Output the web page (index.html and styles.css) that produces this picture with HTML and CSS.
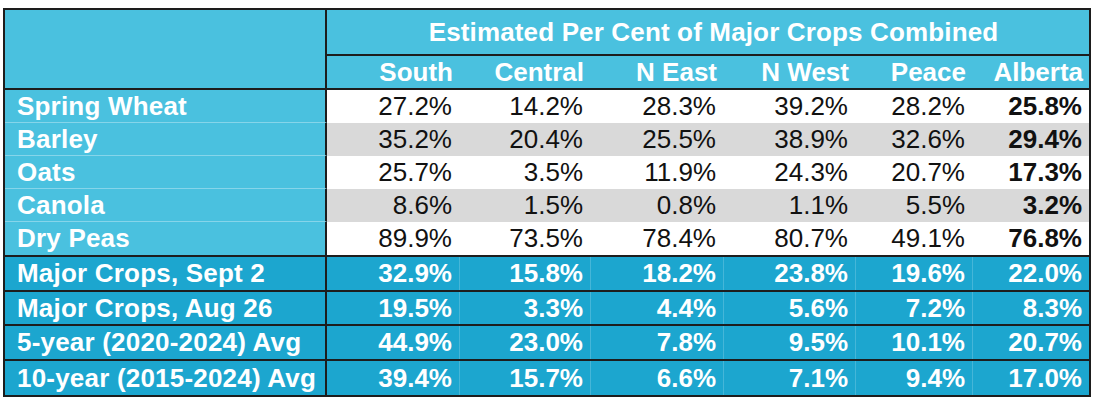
FILE: index.html
```html
<!DOCTYPE html>
<html lang="en">
<head>
<meta charset="utf-8">
<title>Estimated Per Cent of Major Crops Combined</title>
<link rel="stylesheet" href="styles.css">
</head>
<body>
<div class="report">
  <div class="head">
    <div class="corner"></div>
    <div class="title">Estimated Per Cent of Major Crops Combined</div>
    <div class="region">South</div>
    <div class="region">Central</div>
    <div class="region">N East</div>
    <div class="region">N West</div>
    <div class="region">Peace</div>
    <div class="region">Alberta</div>
  </div>
  <div class="crops">
    <div class="row">
      <div class="label">Spring Wheat</div>
      <div class="num">27.2%</div><div class="num">14.2%</div><div class="num">28.3%</div><div class="num">39.2%</div><div class="num">28.2%</div><div class="num total">25.8%</div>
    </div>
    <div class="row shade">
      <div class="label">Barley</div>
      <div class="num">35.2%</div><div class="num">20.4%</div><div class="num">25.5%</div><div class="num">38.9%</div><div class="num">32.6%</div><div class="num total">29.4%</div>
    </div>
    <div class="row">
      <div class="label">Oats</div>
      <div class="num">25.7%</div><div class="num">3.5%</div><div class="num">11.9%</div><div class="num">24.3%</div><div class="num">20.7%</div><div class="num total">17.3%</div>
    </div>
    <div class="row shade">
      <div class="label">Canola</div>
      <div class="num">8.6%</div><div class="num">1.5%</div><div class="num">0.8%</div><div class="num">1.1%</div><div class="num">5.5%</div><div class="num total">3.2%</div>
    </div>
    <div class="row last">
      <div class="label">Dry Peas</div>
      <div class="num">89.9%</div><div class="num">73.5%</div><div class="num">78.4%</div><div class="num">80.7%</div><div class="num">49.1%</div><div class="num total">76.8%</div>
    </div>
  </div>
  <div class="summary">
    <div class="srow tall">
      <div class="label">Major Crops, Sept 2</div>
      <div class="num">32.9%</div><div class="num">15.8%</div><div class="num">18.2%</div><div class="num">23.8%</div><div class="num">19.6%</div><div class="num">22.0%</div>
    </div>
    <div class="srow">
      <div class="label">Major Crops, Aug 26</div>
      <div class="num">19.5%</div><div class="num">3.3%</div><div class="num">4.4%</div><div class="num">5.6%</div><div class="num">7.2%</div><div class="num">8.3%</div>
    </div>
    <div class="srow tall">
      <div class="label">5-year (2020-2024) Avg</div>
      <div class="num">44.9%</div><div class="num">23.0%</div><div class="num">7.8%</div><div class="num">9.5%</div><div class="num">10.1%</div><div class="num">20.7%</div>
    </div>
    <div class="srow end">
      <div class="label">10-year (2015-2024) Avg</div>
      <div class="num">39.4%</div><div class="num">15.7%</div><div class="num">6.6%</div><div class="num">7.1%</div><div class="num">9.4%</div><div class="num">17.0%</div>
    </div>
  </div>
</div>
</body>
</html>
```

FILE: styles.css
```css
* { box-sizing: border-box; }

body {
  margin: 0;
  background: #ffffff;
  font-family: "Liberation Sans", Arial, sans-serif;
  font-size: 26px;
}

.report {
  margin: 8px 0 0 3px;
  width: 1088px;
  border: 2px solid #1d1d1d;
  --cols: 322px 132px 131px 133px 132px 117px 117px;
}

.head {
  display: grid;
  grid-template-columns: var(--cols);
  grid-template-rows: 46px 32px;
  background: #4ac1df;
  color: #ffffff;
  font-weight: bold;
  border-bottom: 2px solid #1d1d1d;
}

.corner {
  grid-row: 1 / span 2;
  border-right: 2px solid #1d1d1d;
}

.title {
  grid-column: 2 / span 6;
  display: flex;
  align-items: center;
  justify-content: center;
  padding-left: 11px;
  letter-spacing: 0.15px;
  border-bottom: 2px solid #1d1d1d;
}

.region {
  display: flex;
  align-items: center;
  justify-content: flex-end;
  padding-right: 6px;
  padding-top: 1px;
}

.row, .srow {
  display: grid;
  grid-template-columns: var(--cols);
}

.row {
  height: 33px;
  background: #ffffff;
  color: #111111;
}

.row.shade { background: #d9d9d9; }

.row.last {
  height: 35px;
  border-bottom: 2px solid #1d1d1d;
}

.label {
  display: flex;
  align-items: center;
  padding-left: 12px;
  font-weight: bold;
  color: #ffffff;
  letter-spacing: 0.2px;
  border-right: 2px solid #1d1d1d;
}

.row .label {
  background: #4ac1df;
  border-bottom: 1px solid #86d5ea;
}

.row.last .label { border-bottom: none; }

.num {
  display: flex;
  align-items: center;
  justify-content: flex-end;
  padding-right: 7px;
}

.num.total { font-weight: bold; }

.srow {
  height: 34px;
  background: #1ca6cf;
  color: #ffffff;
  font-weight: bold;
  border-bottom: 2px solid #1d1d1d;
}

.srow.tall { height: 35px; }
.srow.end { border-bottom: none; }

.srow .num + .num {
  border-left: 1px solid #45b6d8;
}
```
